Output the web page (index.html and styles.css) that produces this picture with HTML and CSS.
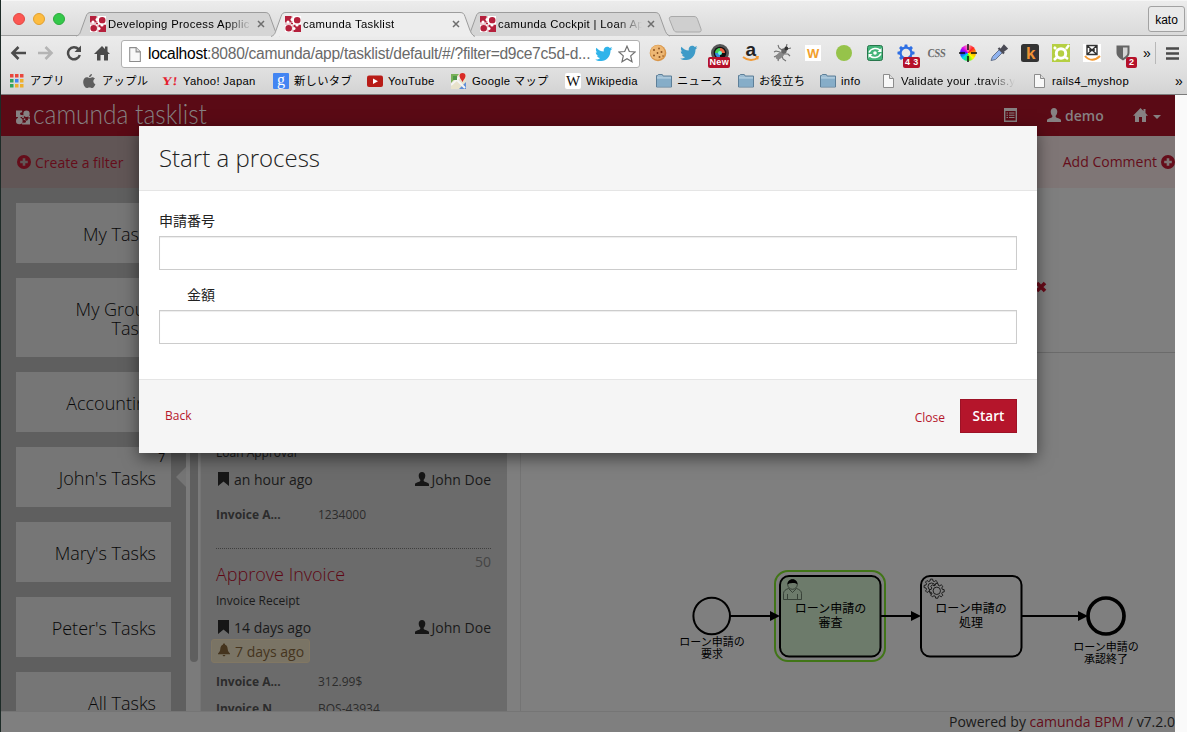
FILE: index.html
```html
<!DOCTYPE html>
<html lang="ja">
<head>
<meta charset="utf-8">
<title>camunda Tasklist</title>
<link rel="stylesheet" href="styles.css">
</head>
<body>
<svg class="defs" width="0" height="0">
  <defs>
    <symbol id="cam" viewBox="0 0 16 16"><path d="M0 0h7v2.200a1.600 1.600 0 1 0 0 2.800v2.300H5.200a1.600 1.600 0 1 1-3 0H0z"/><circle cx="12" cy="3.700" r="3.600"/><path d="M7 5h2v3.500H7z"/><circle cx="3.800" cy="12" r="3.800"/><path d="M8.800 9h2a1.600 1.600 0 1 0 2.600 0H16v7H8.800v-2.400a1.600 1.600 0 1 0 0-2.400z"/><path d="M14 6h2v2h-2zM7 14h2v2H7z"/></symbol>
    <symbol id="user" viewBox="0 0 14 14"><path d="M7 0C5 0 3.700 1.500 3.700 3.600c0 1.900.7 3.300 1.600 4.200v1.300C4.700 10 .4 10.700 0 12.200V14h14v-1.800c-.4-1.500-4.700-2.200-5.300-3.100V7.800c.9-.9 1.600-2.300 1.600-4.200C10.300 1.500 9 0 7 0z"/></symbol>
    <symbol id="plus" viewBox="0 0 14 14"><path fill-rule="evenodd" d="M7 0a7 7 0 1 1 0 14A7 7 0 0 1 7 0zM5.700 3.200v2.500H3.200v2.600h2.500v2.500h2.600V8.300h2.500V5.700H8.300V3.200z"/></symbol>
    <symbol id="mark" viewBox="0 0 11 14"><path d="M0 0h11v14L5.500 9.500 0 14z"/></symbol>
    <symbol id="page" viewBox="0 0 16 16"><path d="M3.500 1.500h6l4 4v9h-10z" fill="#f8f8f8" stroke="#8c8c8c"/><path d="M9.500 1.500v4h4" fill="#ddd" stroke="#8c8c8c"/></symbol>
    <symbol id="folder" viewBox="0 0 16 16"><path d="M.5 14V2.500h1l.8-1h4l.8 1.500h8.400V14z" fill="#9dbdd3" stroke="#5d7f98"/><path d="M1 5h14v8.500H1z" fill="#86adc8"/><path d="M1 5h14" stroke="#bcd5e5"/></symbol>
    <symbol id="bird" viewBox="0 0 18 16"><path d="M17.500 2.500l-2 2C15.500 11 11 15.500 5.500 15 3.500 15 1.500 14.300.3 13.400c2 .1 3.700-.4 4.700-1.500-1.500 0-2.700-1-3.100-2.200h1.500C1.800 9.200.8 7.800.8 6.200l1.500.4C.8 5.400.5 3.200 1.400 1.700 3.300 4 5.800 5.300 8.700 5.400 8.300 2.500 10 .8 12.200.8c1 0 2 .4 2.600 1.100l2.300-.8-1.300 1.900z"/></symbol>
    <path id="gear" d="M5.500-1.500L7.400-1.100V1.100L5.500 1.500 4.950 2.830 6 4.450 4.450 6 2.830 4.950 1.500 5.500 1.100 7.400H-1.100L-1.500 5.500-2.830 4.950-4.450 6-6 4.450-4.950 2.830-5.500 1.500-7.400 1.100V-1.100L-5.500-1.500-4.950-2.830-6-4.450-4.450-6-2.830-4.950-1.500-5.500-1.100-7.400H1.100L1.500-5.500 2.830-4.950 4.450-6 6-4.450 4.950-2.830z"/>
    <symbol id="fav" viewBox="0 0 16 16"><path fill="#b5203c" d="M0 0h16v16H0z"/><g fill="#fff"><circle cx="7" cy="3.500" r="1.500"/><path d="M6.600 0h1.200v7H6.600zM0 6.500h6v1.200H0z"/><circle cx="3" cy="6" r="1.500"/><path fill-rule="evenodd" d="M8 0h8v8H8zM12.200 1a3.300 3.300 0 1 0 0 6.600 3.300 3.300 0 0 0 0-6.600z"/><path fill-rule="evenodd" d="M0 8.300h7.600V16H0zM3.700 9a3.300 3.300 0 1 0 0 6.600A3.300 3.300 0 0 0 3.700 9z"/><circle cx="12" cy="9" r="1.600"/><circle cx="9" cy="12.500" r="1.500"/><path d="M8 8.300h8v.8H8zM7.600 8h.9v8h-.9z"/></g></symbol>
  </defs>
</svg>

<div class="window">
  <header class="chrome">
    <div class="tabstrip">
      <div class="lights"><i class="red"></i><i class="amber"></i><i class="green"></i></div>
      <div class="tabs">
        <div class="tab">
          <svg class="shape" viewBox="0 0 206 25"><path d="M0 24C4 23 4 21 5.500 17L10 4.500C11 1.500 12 .5 15 .5H189c3 0 4 1 5 4L198.500 17C200 21 201 23 204 24"/></svg>
          <svg class="fav"><use href="#fav"/></svg><span class="name">Developing Process Applic</span><svg class="x" viewBox="0 0 8 8"><path d="M1 1l6 6M7 1L1 7"/></svg>
        </div>
        <div class="tab active">
          <svg class="shape" viewBox="0 0 206 25"><path d="M0 24.500C4 23 4 21 5.500 17L10 4.500C11 1.500 12 .5 15 .5H189c3 0 4 1 5 4L198.500 17C200 21 201 23 204 24.500"/></svg>
          <svg class="fav"><use href="#fav"/></svg><span class="name">camunda Tasklist</span><svg class="x" viewBox="0 0 8 8"><path d="M1 1l6 6M7 1L1 7"/></svg>
        </div>
        <div class="tab">
          <svg class="shape" viewBox="0 0 206 25"><path d="M8 24C4 23 4 21 5.500 17L10 4.500C11 1.500 12 .5 15 .5H189c3 0 4 1 5 4L198.500 17C200 21 201 23 204 24"/></svg>
          <svg class="fav"><use href="#fav"/></svg><span class="name">camunda Cockpit | Loan Ap</span><svg class="x" viewBox="0 0 8 8"><path d="M1 1l6 6M7 1L1 7"/></svg>
        </div>
      </div>
      <svg class="newtab" viewBox="0 0 34 17"><path d="M4 .5h22c2 0 2.800.8 3.600 3L33 13c.6 2-.2 3-2 3H9c-2 0-3-1-3.700-3L1.500 3.500C.8 1.500 2 .5 4 .5z"/></svg>
      <div class="profile">kato</div>
    </div>

    <div class="toolbar">
      <div class="nav">
        <svg viewBox="0 0 16 16"><path d="M16 8H3M8.500 2L2.500 8l6 6" fill="none" stroke="#4b4b4b" stroke-width="2.600"/></svg>
        <svg viewBox="0 0 16 16"><path d="M0 8h13M7.500 2l6 6-6 6" fill="none" stroke="#b4b4b4" stroke-width="2.600"/></svg>
        <svg viewBox="0 0 16 16"><path d="M12.500 4.200A6 6 0 1 0 13.800 10" fill="none" stroke="#4b4b4b" stroke-width="2.500"/><path d="M15 .5V7H8.500z" fill="#4b4b4b"/></svg>
        <svg viewBox="0 0 16 16"><path d="M8 1l3 3V1.500h2.500V6.500L16 9h-2v6.500h-4V10H6.500v5.500H3V9H0z" fill="#4b4b4b"/></svg>
      </div>
      <div class="omnibox">
        <svg class="doc"><use href="#page"/></svg>
        <span class="url"><b>localhost</b>:8080/camunda/app/tasklist/default/#/?filter=d9ce7c5d-d...</span>
        <svg class="tw" fill="#30b4ea"><use href="#bird"/></svg>
        <svg class="star" viewBox="0 0 18 18"><path d="M9 1.200l2.300 5.300 5.800.5-4.400 3.900 1.300 5.800L9 13.700l-5 3 1.300-5.800L.9 7l5.800-.5z" fill="#fff" stroke="#6f6f6f" stroke-width="1.200"/></svg>
      </div>
      <div class="exts">
        <div><svg viewBox="0 0 18 18"><circle cx="9" cy="9" r="8.300" fill="#d9964a"/><circle cx="8.500" cy="8.500" r="7.200" fill="#edb774"/><g fill="#8c5220"><circle cx="5" cy="6" r="1"/><circle cx="10" cy="4.500" r=".9"/><circle cx="12.500" cy="8" r="1"/><circle cx="8.500" cy="9" r=".9"/><circle cx="5" cy="11.500" r="1"/><circle cx="10.500" cy="13" r="1"/><circle cx="14" cy="12" r=".8"/></g></svg></div>
        <div><svg fill="#3e9bc8"><use href="#bird"/></svg></div>
        <div><svg viewBox="0 0 18 18"><circle cx="9" cy="9" r="9" fill="#555"/><circle cx="9" cy="9" r="6.300" fill="#111"/><path d="M9 9V4a5 5 0 0 1 5 5z" fill="#e64"/><path d="M9 9H4a5 5 0 0 1 5-5z" fill="#4c5"/><path d="M9 9v5a5 5 0 0 1-5-5z" fill="#38d"/><circle cx="9" cy="9" r="2" fill="#6fd"/></svg><em class="new">New</em></div>
        <div><svg viewBox="0 0 18 18"><text x="3.500" y="11.500" font-family="Liberation Sans" font-weight="bold" font-size="19" fill="#222">a</text><path d="M1 13c5 4 11 4 15 .5" fill="none" stroke="#f19b38" stroke-width="2"/><path d="M13 12h4l-1 4z" fill="#f19b38"/></svg></div>
        <div><svg viewBox="0 0 18 18"><g stroke="#707070" stroke-width="1.100" fill="none"><path d="M9 6L6 4 5 1M7 8L3 7 1 8M11 10l4 0 2 2M9 12l1 3 3 2M6 13l-1 4M5 11l-4 2M13 4l1-4M14 5l4-1"/></g><ellipse cx="7" cy="11.500" rx="5" ry="2.800" transform="rotate(-42 7 11.500)" fill="#888"/><circle cx="11" cy="7" r="2.700" fill="#666"/><circle cx="13.300" cy="4.500" r="1.900" fill="#333"/></svg></div>
        <div><svg viewBox="0 0 18 18"><path fill="#fff" d="M1 1h16v16H1z"/><text x="3" y="13.500" font-family="Liberation Sans" font-weight="bold" font-size="13" fill="#f2a02c">W</text></svg></div>
        <div><svg viewBox="0 0 18 18"><circle cx="9" cy="9" r="8" fill="#96c34a"/></svg></div>
        <div><svg viewBox="0 0 18 18"><rect x="1.500" y="1.500" width="15" height="15" rx="2" fill="#43b479" stroke="#28764c"/><path d="M3 8.500C5 4 12 3 14.500 7M15 9.500C13 14 6 15 3.500 11" fill="none" stroke="#fff" stroke-width="1.500"/><path d="M15.500 4v4h-4zM2.500 14v-4h4z" fill="#fff"/><circle cx="9" cy="9" r="1.800" fill="#fff"/></svg></div>
        <div><svg viewBox="-9 -9 18 18"><use href="#gear" fill="#2e6fe4" transform="scale(1.150)"/><circle r="4.300" fill="#e8e8e8"/></svg><em>4 3</em></div>
        <div class="css">CSS</div>
        <div class="wheel"><i></i><svg viewBox="0 0 18 18"><path d="M9 0v6M9 12v6M0 9h6M12 9h6" stroke="#111" stroke-width="1.500"/></svg></div>
        <div><svg viewBox="0 0 18 18"><path d="M1 16.500l1.500-4L9.500 5.500l3 3-7 7z" fill="#8fb2ee" stroke="#66738c"/><path d="M8.500 4l5.500 5.500M11 6l3-4 2.500 2.500-4 3z" stroke="#4b4b55" stroke-width="2.200" fill="#4b4b55"/></svg></div>
        <div><svg viewBox="0 0 18 18"><rect width="18" height="18" rx="2.500" fill="#333"/><text x="5" y="15" font-family="Liberation Sans" font-weight="bold" font-size="17" fill="#ef9234">k</text></svg></div>
        <div><svg viewBox="0 0 18 18"><path fill="#b5cf42" d="M0 0h18v18H0z"/><circle cx="9" cy="9.500" r="4.700" fill="none" stroke="#fff" stroke-width="3"/><path d="M4 5L2 3M14 5l3-4M5 13l-3 3M13 13l3 2" stroke="#fff" stroke-width="2.500"/></svg></div>
        <div><svg viewBox="0 0 18 18"><path fill="#fff" d="M0 0h18v18H0z"/><path d="M4 1.500h10v9H4zM4 1.500l10 9M14 1.500l-10 9M6 6h6" fill="none" stroke="#333" stroke-width="1.400"/><path d="M2 12c4 5 10 5 15 0" fill="none" stroke="#f39a32" stroke-width="2"/></svg></div>
        <div><svg viewBox="0 0 18 18"><path d="M2.500 1.500h13v7c0 4-3.500 6-6.500 8-3-2-6.500-4-6.500-8z" fill="#656565"/><path d="M9 3.500h4.500v5c0 3-2.500 4-4.500 5.500z" fill="#d5d5d5"/></svg><em class="two">2</em></div>
      </div>
      <span class="more">»</span>
      <svg class="menu" viewBox="0 0 13 13"><path d="M0 1.500h13M0 6.500h13M0 11.500h13" stroke="#4a4a4a" stroke-width="2.600"/></svg>
    </div>

    <div class="bookmarks">
      <a><svg viewBox="0 0 16 16"><path d="M1 1h3.500v3.500H1zM6 1h3.500v3.500H6zM11 1h3.500v3.500H11z" fill="#e9463c"/><path d="M1 6h3.500v3.500H1zM1 11h3.500v3.500H1z" fill="#31a35d"/><path d="M6 6h3.500v3.500H6z" fill="#4285f0"/><path d="M11 6h3.500v3.500H11zM6 11h3.500v3.500H6zM11 11h3.500v3.500H11z" fill="#eeb02c"/></svg>アプリ</a>
      <a><svg viewBox="0 0 16 16"><path d="M11 1c0 2-1.500 3.200-3 3.200C8 2.500 9.500 1.200 11 1zM8.300 5c1 0 1.700-.8 3-.8 1 0 2 .6 2.600 1.400-2.300 1.500-1.900 4.700.5 5.600C13.800 13 12.500 15 11.200 15c-1 0-1.500-.6-2.700-.6s-1.700.6-2.700.6C4 15 2.200 11.800 2.200 9c0-3 1.800-4.700 3.600-4.700 1 0 1.800.7 2.500.7z" fill="#5e5e5e"/></svg>アップル</a>
      <a><svg viewBox="0 0 16 16"><text x="-.5" y="12.500" font-family="Liberation Serif" font-weight="bold" font-size="12" textLength="16" lengthAdjust="spacingAndGlyphs" fill="#e4202f" transform="skewX(-6) translate(1.300)">Y!</text></svg>Yahoo! Japan</a>
      <a><svg viewBox="0 0 16 16"><rect width="16" height="16" rx="1" fill="#4385f2"/><text x="4" y="11.500" font-family="Liberation Serif" font-size="16" fill="#fff">g</text></svg>新しいタブ</a>
      <a><svg viewBox="0 0 16 16"><rect y="2.500" width="16" height="11.500" rx="2" fill="#b81c17"/><path d="M6 5.500v5.500l5-2.700z" fill="#fff"/></svg>YouTube</a>
      <a><svg viewBox="0 0 16 16"><path fill="#e8e2cc" d="M0 1h15v15H0z"/><path d="M0 1h8l-8 9z" fill="#78b159"/><path d="M8 16l7-7v7z" fill="#5e8ed8"/><path d="M0 12L12 1M5 6l9 9" stroke="#f5f5f5" stroke-width="2"/><path d="M2 3h4v4H2z" fill="#4e9847"/><path d="M11.500 9C10 6 8.500 5 8.500 3a3 3 0 0 1 6 0c0 2-1.500 3-3 6z" fill="#d92b27"/></svg>Google マップ</a>
      <a><svg viewBox="0 0 16 16"><rect width="16" height="16" rx="2" fill="#fff"/><text x="1" y="13" font-family="Liberation Serif" font-size="15" fill="#111">W</text></svg>Wikipedia</a>
      <a><svg><use href="#folder"/></svg>ニュース</a>
      <a><svg><use href="#folder"/></svg>お役立ち</a>
      <a><svg><use href="#folder"/></svg>info</a>
      <a class="fade"><svg><use href="#page"/></svg>Validate your .travis.y</a>
      <a><svg><use href="#page"/></svg>rails4_myshop</a>
      <span>»</span>
    </div>
  </header>

  <div class="page">
    <div class="app">
      <nav class="topbar">
        <svg class="brandmark"><use href="#cam"/></svg>
        <svg class="brand" viewBox="0 0 176 34"><text x="0" y="25" textLength="174" lengthAdjust="spacingAndGlyphs">camunda tasklist</text></svg>
        <svg class="listicon" viewBox="0 0 13 14"><path d="M.7.700h11.600v12.600H.7z" fill="none" stroke="#868182" stroke-width="1.400"/><path d="M0 0h13v3H0zM2.500 4.500H4v1H2.500zM5 4.500h5.500v1H5zM2.500 6.700H4v1H2.500zM5 6.700h5.500v1H5zM2.500 9H4v1H2.500zM5 9h5.500v1H5z"/></svg>
        <span class="who"><svg><use href="#user"/></svg>demo</span>
        <svg class="home" viewBox="0 0 15 14"><path d="M7.500 0l3 3V1h2v4L15 7.700h-2V14H9V9H6v5H2V7.700H0z"/></svg>
        <i class="caret"></i>
      </nav>
      <div class="subbar">
        <span><svg><use href="#plus"/></svg>Create a filter</span>
        <span>Add Comment<svg><use href="#plus"/></svg></span>
      </div>
      <div class="cols">
        <aside class="filters">
          <div>My Tasks</div>
          <div class="tall">My Group Tasks</div>
          <div>Accounting</div>
          <div class="current"><small>7</small>John's Tasks</div>
          <div>Mary's Tasks</div>
          <div>Peter's Tasks</div>
          <div>All Tasks</div>
        </aside>
        <div class="track"><i></i></div>
        <section class="tasks">
          <article>
            <p class="proc">Loan Approval</p>
            <p class="meta"><span><svg class="mark"><use href="#mark"/></svg>an hour ago</span><span><svg class="user"><use href="#user"/></svg>John Doe</span></p>
            <p class="var"><b>Invoice A...</b><span>1234000</span></p>
          </article>
          <article>
            <p class="prio">50</p>
            <h3>Approve Invoice</h3>
            <p class="proc">Invoice Receipt</p>
            <p class="meta"><span><svg class="mark"><use href="#mark"/></svg>14 days ago</span><span><svg class="user"><use href="#user"/></svg>John Doe</span></p>
            <p class="due"><svg viewBox="0 0 13 14"><path d="M6.500 0c.8 0 1.200.5 1.200 1.200C9.500 1.800 10.300 3.500 10.500 6c.2 2.200 1 3.500 2.500 4.700v.8H0v-.8C1.500 9.500 2.300 8.200 2.500 6c.2-2.500 1-4.200 2.800-4.800C5.300.5 5.700 0 6.500 0zM5 12.300h3c-.2 1-.7 1.500-1.500 1.500S5.200 13.300 5 12.300z"/></svg>7 days ago</p>
            <p class="var"><b>Invoice A...</b><span>312.99$</span></p>
            <p class="var"><b>Invoice N...</b><span>BOS-43934</span></p>
          </article>
        </section>
        <section class="detail">
          <div class="upper"><svg viewBox="0 0 12 12"><path d="M2 2l8 8M10 2l-8 8" stroke="#680b19" stroke-width="3.600"/></svg></div>
          <svg class="diagram" viewBox="521 353 654 358">
            <rect x="775" y="571" width="110" height="90" rx="13" fill="none" stroke="#417517" stroke-width="2"/>
            <g fill="none" stroke="#000" stroke-width="2">
              <circle cx="711.700" cy="616" r="18.300"/>
              <rect x="780" y="576" width="100.500" height="80.500" rx="9" fill="#6d7b6b"/>
              <rect x="921" y="576" width="100.500" height="80.500" rx="9"/>
              <circle cx="1106" cy="616" r="18" stroke-width="3.700"/>
              <path d="M730 616h43M881 616h33M1022 616h58"/>
            </g>
            <path d="M770 611l10 5-10 5zM911 611l10 5-10 5zM1078 611l10 5-10 5z"/>
            <g fill="none" stroke="#2b332b" stroke-width=".8"><path d="M783.500 599.500v-6c0-2.500 2-4 5-5l4 4 4-4c3 1 5 2.500 5 5v6zM787.500 599v-5M797.500 599v-5"/><circle cx="792.500" cy="584.500" r="4.800"/></g>
            <path d="M787.500 584.500c0-3 2-5.300 5-5.300s5 2.300 5 5.300c-1.500-1.500-4-1.800-5.300-1.500-1.700.2-3 .2-4.700 1.500z"/>
            <g fill="#7f7f7f" stroke="#111" stroke-width=".9"><use href="#gear" transform="translate(931.500 586.500)"/><circle cx="931.500" cy="586.500" r="3.500"/><use href="#gear" transform="translate(936.800 590.800)"/><circle cx="936.800" cy="590.800" r="3.700"/></g>
            <g class="t12"><text x="830.500" y="612.500">ローン申請の</text><text x="830.500" y="626.500">審査</text><text x="971" y="612.500">ローン申請の</text><text x="971" y="626.500">処理</text></g>
            <g class="t11"><text x="712" y="645.500">ローン申請の</text><text x="712" y="657.500">要求</text><text x="1106" y="650.500">ローン申請の</text><text x="1106" y="662.500">承認終了</text></g>
          </svg>
        </section>
      </div>
      <footer>Powered by <a>camunda BPM</a> / v7.2.0</footer>
      <div class="modal">
        <h4>Start a process</h4>
        <form>
          <label>申請番号</label><input type="text">
          <label class="indent">金額</label><input type="text">
        </form>
        <div class="actions"><a class="back">Back</a><a class="close">Close</a><button type="button">Start</button></div>
      </div>
    </div>
  </div>
</div>
</body>
</html>
```

FILE: styles.css
```css
* { box-sizing: border-box; }
body { margin: 0; width: 1187px; height: 732px; overflow: hidden; background: #fafafa; font-family: "Open Sans", "Noto Sans CJK JP", sans-serif; }
p, h3, h4 { margin: 0; }
svg { display: block; flex: none; }
.defs { position: absolute; }
.window { height: 732px; border-left: 1px solid #1d2b27; display: flex; flex-direction: column; }

/* browser frame */
.chrome { height: 95px; flex: none; border-bottom: 1px solid #7b7b7b; background: #d4d4d4; font-family: "Liberation Sans", "Noto Sans CJK JP", sans-serif; font-size: 11px; letter-spacing: .32px; color: #000; }
.tabstrip { height: 36px; display: flex; background: linear-gradient(#ececec, #dadada); border-bottom: 1px solid #a0a0a0; border-top: 1px solid #f6f6f6; }
.lights { display: flex; gap: 8px; padding: 12px 0 0 12px; width: 75px; }
.lights i { width: 12px; height: 12px; border-radius: 50%; }
.red { background: #fc5753; border: 1px solid #e04943; }
.amber { background: #fdbc40; border: 1px solid #e0a02f; }
.green { background: #34c84a; border: 1px solid #2caa3c; }
.tabs { display: flex; padding-top: 11px; width: 592px; }
.tab { width: 195px; height: 25px; position: relative; z-index: 1; isolation: isolate; display: flex; padding: 4px 0 0 14px; }
.tab .shape { position: absolute; left: 0; top: 0; width: 206px; height: 25px; fill: #d5d5d5; stroke: #9c9c9c; z-index: -1; }
.tab.active { z-index: 2; }
.active .shape { fill: #ededed; }
.fav { width: 16px; height: 16px; }
.name { width: 145px; margin-left: 2px; line-height: 16px; font-size: 11.3px; white-space: nowrap; -webkit-mask-image: linear-gradient(90deg, #000 118px, transparent 144px); mask-image: linear-gradient(90deg, #000 118px, transparent 144px); }
.x { width: 8px; height: 8px; margin: 4px 0 0 4px; fill: none; stroke: #6e6e6e; stroke-width: 1.5; }
.newtab { width: 34px; height: 17px; margin-top: 15px; fill: #cfcfcf; stroke: #a9a9a9; }
.profile { margin: 5px 2px 0 auto; width: 37px; height: 26px; border: 1px solid #a2a2a2; border-radius: 3px; background: #e9e9e9; font-size: 12px; letter-spacing: 0; text-align: center; line-height: 26px; }
.toolbar { height: 34px; display: flex; align-items: center; background: linear-gradient(#ebebeb, #e0e0e0); }
.nav { display: flex; gap: 12px; padding-left: 9px; width: 120px; }
.nav svg { width: 16px; height: 16px; }
.omnibox { width: 519px; height: 28px; margin: 2px 0 0; border: 1px solid #b0b0b0; border-radius: 3px; background: #fff; display: flex; align-items: center; padding-left: 4px; }
.doc { width: 17px; height: 17px; }
.url { width: 447px; margin-left: 5px; font-size: 15.6px; letter-spacing: -.29px; color: #6a6a6a; white-space: nowrap; }
.url b { color: #000; font-weight: 400; }
.tw { width: 18px; height: 16px; }
.star { width: 18px; height: 18px; margin-left: 5px; }
.exts { display: grid; grid-template-columns: repeat(16, 31px); margin-left: 2px; }
.exts div { height: 20px; position: relative; display: flex; align-items: center; justify-content: center; }
.exts svg { width: 18px; height: 18px; }
.exts em { position: absolute; left: 13px; top: 14px; background: #b5112a; color: #fff; font: bold 9px/11px "Liberation Sans"; border-radius: 2px; padding: 0 2px; white-space: nowrap; }
.exts em.new { left: 4px; padding: 0 1.5px; }
.exts em.two { left: 19px; padding: 0 3px; }
.exts .css { font: bold 12px "Liberation Serif", serif; letter-spacing: -.3px; color: #6c6c6c; transform: skewX(-4deg) scaleX(.85); }
.wheel i { position: absolute; width: 16px; height: 16px; border-radius: 50%; background: conic-gradient(#f9a, #f22, #fa0, #ff0, #3e3, #0de, #22f, #d0e, #f9a); }
.wheel svg { position: relative; }
.more { margin-left: 5px; font-size: 14px; width: 13px; border-right: 1px solid #b8b8b8; line-height: 22px; }
.menu { width: 13px; height: 13px; margin-left: 10px; }
.bookmarks { height: 24px; display: grid; grid-template-columns: 72px 81px 111px 94px 84px 114px 91px 82px 82px 60px 151px 144px 14px; padding: 0 0 2px 8px; align-items: center; background: linear-gradient(#e0e0e0, #d3d3d3); font-size: 11.3px; line-height: 18px; }
.bookmarks a { display: flex; align-items: center; gap: 5px; white-space: nowrap; }
.bookmarks svg { width: 16px; height: 16px; }
.bookmarks span { font-size: 14px; }
.bookmarks .fade { width: 136px; -webkit-mask-image: linear-gradient(90deg, #000 108px, transparent 135px); mask-image: linear-gradient(90deg, #000 108px, transparent 135px); }

/* dimmed application */
.page { flex: 1; min-height: 0; }
.app { position: relative; width: 1174px; height: 637px; background: #7f7f7f; display: flex; flex-direction: column; color: #1a1a1a; }
.topbar { height: 41px; flex: none; background: #5a0a15; display: flex; align-items: center; fill: #868182; color: #868182; padding-left: 15px; }
.brandmark { width: 14px; height: 15px; margin-top: 3px; }
.brand { width: 176px; height: 34px; margin-left: 3px; font-family: Lato, sans-serif; font-weight: 300; font-size: 27px; overflow: visible; }
.listicon { width: 13px; height: 14px; margin: -1px 0 0 795px; }
.who { display: flex; align-items: center; gap: 4px; margin-left: 30px; font-size: 14px; font-weight: 600; width: 56px; }
.who svg { width: 14px; height: 14px; margin-top: -2px; }
.home { width: 15px; height: 14px; margin: -2px 0 0 30px; }
.caret { border: 4px solid transparent; border-top-color: #868182; border-bottom: 0; margin: 2px 0 0 5px; }
.subbar { height: 52px; flex: none; background: linear-gradient(90deg, #615656 0 185px, #7f7676 185px); display: flex; justify-content: space-between; align-items: center; color: #650d1a; fill: #650d1a; font-size: 14px; padding-left: 16px; }
.subbar span { display: flex; align-items: center; gap: 4px; }
.subbar span + span { margin-top: -1px; }
.subbar svg { width: 14px; height: 14px; }
.cols { flex: 1; min-height: 0; display: flex; overflow: hidden; }
.filters { width: 185px; flex: none; background: #5f5f5f; padding: 15px 15px 0; display: flex; flex-direction: column; gap: 15px; }
.filters div { height: 60px; flex: none; background: #767676; padding-right: 15px; font-size: 18px; font-weight: 300; line-height: 19px; text-align: right; display: flex; align-items: center; justify-content: flex-end; padding-top: 3px; color: #080808; position: relative; }
.filters .tall { height: 79px; padding-left: 30px; }
.filters small { position: absolute; right: 6px; top: 1px; font-size: 12px; font-weight: 400; }
.current::after { content: ""; position: absolute; right: -15px; top: 20px; border: 10px solid transparent; border-right-color: #757575; border-left: 0; }
.track { width: 15px; flex: none; background: #7b7b7b; border-right: 1px solid #757575; padding: 0 1px 0 4px; }
.track i { display: block; width: 8px; height: 474px; background: #5f5f5f; border-radius: 0 0 4px 4px; }
.tasks { width: 306px; flex: none; background: #6b6b6b; padding: 256px 16px 0 15px; font-size: 14px; overflow: hidden; }
.tasks article + article { border-top: 1px dotted #3e3e3e; }
.tasks article:first-child { height: 104px; }
.proc { font-size: 12px; line-height: 17px; }
.meta { display: flex; justify-content: space-between; font-size: 14px; line-height: 20px; margin-top: 9px; }
.meta span { display: flex; align-items: center; gap: 3px; }
.mark { width: 11px; height: 14px; fill: #161616; margin: -3px 2px 0 2px; }
.user { width: 14px; height: 14px; fill: #161616; margin-top: -3px; }
.var { display: flex; font-size: 12px; line-height: 17px; color: #2c2c2c; margin-top: 16px; }
.var b { width: 102px; }
.prio { text-align: right; color: #454545; line-height: 20px; margin-top: 3px; height: 9px; }
h3 { font-size: 18px; font-weight: 300; color: #5e0714; line-height: 26px; margin: 0 0 5px; }
.due { display: flex; align-items: center; gap: 5px; width: 99px; height: 24px; margin: 1px 0 0 -5px; padding-left: 6px; background: #7a7465; border: 1px solid #817763; border-radius: 3px; color: #45341e; fill: #45341e; font-size: 14px; }
.due svg { width: 12px; height: 14px; margin-top: -2px; }
.due + .var { margin-top: 10px; }
.var + .var { margin-top: 10px; }
.detail { flex: 1; border-left: 1px solid #747474; margin-left: 13px; display: flex; flex-direction: column; }
.upper { height: 165px; flex: none; border-bottom: 1px solid #6b6b6b; padding: 93px 0 0 514px; }
.upper svg { width: 12px; height: 12px; }
.diagram { width: 654px; height: 358px; font-family: "Liberation Sans", "Noto Sans CJK JP", sans-serif; text-anchor: middle; }
.t12 { font-size: 12px; }
.t11 { font-size: 11px; }
footer { height: 21px; flex: none; border-top: 1px solid #757575; text-align: right; font-size: 14px; line-height: 20px; background: #7f7f7f; }
footer a { color: #650d1a; }

/* dialog */
.modal { position: absolute; left: 138px; top: 31px; width: 898px; height: 327px; background: #fff; box-shadow: 0 5px 15px rgba(0, 0, 0, .5); color: #333; display: flex; flex-direction: column; }
h4 { height: 65px; background: #f5f5f5; border-bottom: 1px solid #e5e5e5; padding-left: 20px; font-size: 24px; font-weight: 300; line-height: 64px; color: #222; }
form { height: 188px; padding: 20px 20px 0; display: flex; flex-direction: column; }
label { height: 25px; font-size: 14px; line-height: 19px; color: #222; }
input { height: 34px; border: 1px solid #ccc; box-shadow: inset 0 1px 1px rgba(0, 0, 0, .075); margin-bottom: 15px; }
.indent { padding-left: 28px; }
.actions { flex: 1; background: #f5f5f5; border-top: 1px solid #e5e5e5; display: flex; align-items: center; padding: 0 20px 1px 26px; font-size: 12px; color: #b5152b; }
.back { margin-top: -2px; }
.close { margin: 2px 15px 0 auto; }
button { width: 57px; height: 34px; padding: 0; border: 1px solid #9d1226; background: #b5152b; color: #fff; font: 600 13.5px "Open Sans"; }
```
